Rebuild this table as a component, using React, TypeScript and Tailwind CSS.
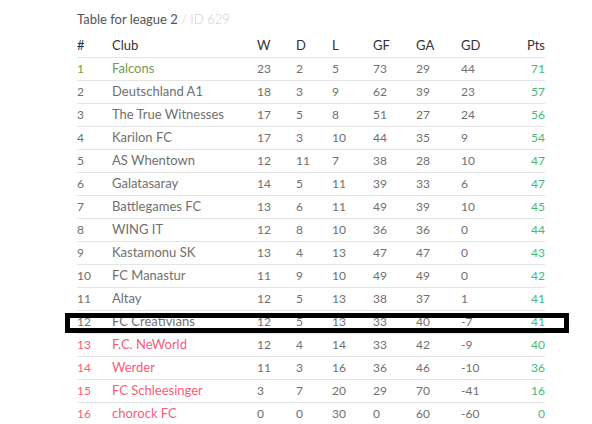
const rows = [
  { pos: 1, club: "Falcons", w: 23, d: 2, l: 5, gf: 73, ga: 29, gd: 44, pts: 71, zone: "top" },
  { pos: 2, club: "Deutschland A1", w: 18, d: 3, l: 9, gf: 62, ga: 39, gd: 23, pts: 57, zone: "mid" },
  { pos: 3, club: "The True Witnesses", w: 17, d: 5, l: 8, gf: 51, ga: 27, gd: 24, pts: 56, zone: "mid" },
  { pos: 4, club: "Karilon FC", w: 17, d: 3, l: 10, gf: 44, ga: 35, gd: 9, pts: 54, zone: "mid" },
  { pos: 5, club: "AS Whentown", w: 12, d: 11, l: 7, gf: 38, ga: 28, gd: 10, pts: 47, zone: "mid" },
  { pos: 6, club: "Galatasaray", w: 14, d: 5, l: 11, gf: 39, ga: 33, gd: 6, pts: 47, zone: "mid" },
  { pos: 7, club: "Battlegames FC", w: 13, d: 6, l: 11, gf: 49, ga: 39, gd: 10, pts: 45, zone: "mid" },
  { pos: 8, club: "WING IT", w: 12, d: 8, l: 10, gf: 36, ga: 36, gd: 0, pts: 44, zone: "mid" },
  { pos: 9, club: "Kastamonu SK", w: 13, d: 4, l: 13, gf: 47, ga: 47, gd: 0, pts: 43, zone: "mid" },
  { pos: 10, club: "FC Manastur", w: 11, d: 9, l: 10, gf: 49, ga: 49, gd: 0, pts: 42, zone: "mid" },
  { pos: 11, club: "Altay", w: 12, d: 5, l: 13, gf: 38, ga: 37, gd: 1, pts: 41, zone: "mid" },
  { pos: 12, club: "FC Creativians", w: 12, d: 5, l: 13, gf: 33, ga: 40, gd: -7, pts: 41, zone: "mid", marked: true },
  { pos: 13, club: "F.C. NeWorld", w: 12, d: 4, l: 14, gf: 33, ga: 42, gd: -9, pts: 40, zone: "low" },
  { pos: 14, club: "Werder", w: 11, d: 3, l: 16, gf: 36, ga: 46, gd: -10, pts: 36, zone: "low" },
  { pos: 15, club: "FC Schleesinger", w: 3, d: 7, l: 20, gf: 29, ga: 70, gd: -41, pts: 16, zone: "low" },
  { pos: 16, club: "chorock FC", w: 0, d: 0, l: 30, gf: 0, ga: 60, gd: -60, pts: 0, zone: "low" },
];

const grid = "grid grid-cols-[35px_145px_39px_36px_41px_43px_45px_1fr_auto] items-center";

export default function App() {
  return (
    <div className="w-[592px] h-[424px] overflow-hidden bg-white pl-[77px] pt-[9px] font-['Lato','Open_Sans',sans-serif]">
      <div className="w-[468px]">
        <div className="h-5 leading-5 text-[13px] text-[#555]">
          Table for league 2 <span className="text-[#ccc] font-light">/ ID 629</span>
        </div>

        <div className={`${grid} h-[23px] mt-[6px] border-b border-[#e5e5e5] text-[13px] text-[#333]`}>
          <span>#</span>
          <span>Club</span>
          <span>W</span>
          <span>D</span>
          <span>L</span>
          <span>GF</span>
          <span>GA</span>
          <span>GD</span>
          <span className="text-right">Pts</span>
        </div>

        {rows.map((r) => {
          const tone =
            r.zone === "top" ? "text-[#76994f]" : r.zone === "low" ? "text-[#f2607a]" : "text-[#707070]";
          return (
            <div key={r.pos} className="relative">
              <div className={`${grid} h-[23px] border-b border-[#e5e5e5] text-[12px] text-[#707070]`}>
                <span className={tone}>{r.pos}</span>
                <span className={`${tone} text-[13px]`}>{r.club}</span>
                <span>{r.w}</span>
                <span>{r.d}</span>
                <span>{r.l}</span>
                <span>{r.gf}</span>
                <span>{r.ga}</span>
                <span>{r.gd}</span>
                <span className="text-right text-[#45b97c]">{r.pts}</span>
              </div>
              {r.marked && (
                <div className="absolute left-[-12px] top-[2px] w-[504px] h-[20px] border-[5px] border-black" />
              )}
            </div>
          );
        })}
      </div>
    </div>
  );
}
